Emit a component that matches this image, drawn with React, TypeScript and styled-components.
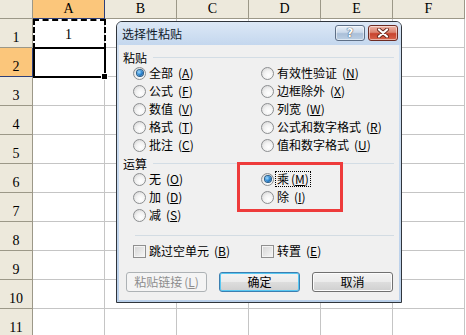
import React from "react";
import styled, { createGlobalStyle } from "styled-components";

const GlobalStyle = createGlobalStyle`
  html, body {
    margin: 0;
    padding: 0;
  }
  body {
    width: 466px;
    height: 335px;
    overflow: hidden;
    background: #fff;
    font-family: "Noto Sans CJK SC", sans-serif;
  }
`;

const Screen = styled.div`
  position: relative;
  width: 466px;
  height: 335px;
  overflow: hidden;
  background: #fff;
`;

/* ---------- spreadsheet ---------- */

const Sheet = styled.div`
  display: grid;
  grid-template-columns: 33px repeat(6, 72px);
  grid-template-rows: 19px repeat(11, 29px);
  font-family: "Liberation Serif", "DejaVu Serif", serif;
  font-size: 14px;
  color: #000;
`;

const HeadCell = styled.div<{ $active?: boolean; $row?: boolean }>`
  box-sizing: border-box;
  display: flex;
  justify-content: center;
  align-items: ${({ $row }) => ($row ? "flex-end" : "center")};
  padding-bottom: ${({ $row }) => ($row ? "1px" : "0")};
  background: ${({ $active }) => ($active ? "#fbc67b" : "#ede9dc")};
  border-right: 1px solid ${({ $active }) => ($active ? "#2d3f7a" : "#9c9888")};
  border-bottom: 1px solid ${({ $active }) => ($active ? "#2d3f7a" : "#9c9888")};
`;

const Cell = styled.div<{ $mode?: "copied" | "selected" }>`
  position: relative;
  box-sizing: border-box;
  display: flex;
  justify-content: center;
  align-items: flex-end;
  padding-bottom: 4px;
  border-right: 1px solid #c5c5c5;
  border-bottom: 1px solid #c5c5c5;

  &::after {
    content: "";
    position: absolute;
    display: ${({ $mode }) => ($mode ? "block" : "none")};
    left: 0;
    top: ${({ $mode }) => ($mode === "selected" ? "-1px" : "0")};
    right: -2px;
    bottom: -2px;
    border: 2px ${({ $mode }) => ($mode === "copied" ? "dashed" : "solid")} #000;
  }
`;

const FillHandle = styled.span`
  position: absolute;
  right: -4px;
  bottom: -4px;
  width: 5px;
  height: 5px;
  background: #000;
  border: 1px solid #fff;
  z-index: 1;
`;

/* ---------- dialog ---------- */

const Dialog = styled.div`
  position: absolute;
  left: 116px;
  top: 21px;
  width: 286px;
  height: 282px;
  box-sizing: border-box;
  border: 1px solid #30353c;
  border-radius: 6px 6px 0 0;
  background: linear-gradient(#d3e2f3, #b9cfe9);
  display: flex;
  flex-direction: column;
  font-family: "Noto Sans CJK SC", sans-serif;
  font-size: 12px;
  color: #000;
  overflow: hidden;
`;

const TitleBar = styled.div`
  height: 23px;
  flex: none;
  display: flex;
  align-items: center;
  gap: 3px;
  padding: 0 3px 0 5px;
  background: linear-gradient(#dce8f6, #c4d7ee);
`;

const Title = styled.span`
  flex: 1;
  font-size: 12px;
  color: #0f1a2a;
  line-height: 1;
`;

const CaptionButton = styled.button<{ $close?: boolean }>`
  width: 30px;
  height: 16px;
  box-sizing: border-box;
  padding: 0;
  margin-top: -1px;
  border-radius: 3px;
  border: 1px solid ${({ $close }) => ($close ? "#6d2b22" : "#5e6f86")};
  background: ${({ $close }) =>
    $close
      ? "linear-gradient(#edb4a6 0%, #dc8470 45%, #c8432e 55%, #d8654c 100%)"
      : "linear-gradient(#eaf1f8 0%, #cbd9ea 45%, #aabfd8 55%, #bccfe4 100%)"};
  box-shadow: inset 0 0 0 1px rgba(255, 255, 255, 0.5);
  display: flex;
  align-items: center;
  justify-content: center;
  font-family: "DejaVu Sans", sans-serif;
  font-weight: bold;
  font-size: 12px;
  color: #fff;
  text-shadow: 0 0 1px #34445a, 0 0 1px #34445a;
`;

const Body = styled.div`
  flex: 1;
  margin: 0 2px 2px;
  background: #f0f0f0;
  display: flex;
  flex-direction: column;
  padding-left: 4px;
`;

const GroupHeader = styled.div<{ $top: number }>`
  height: 13px;
  margin-top: ${({ $top }) => $top}px;
  display: flex;
  align-items: center;
  gap: 6px;
  line-height: 1;

  &::after {
    content: "";
    flex: 1;
    height: 1px;
    margin-right: 5px;
    background: #d3dde5;
  }
`;

const OptionGrid = styled.div`
  display: grid;
  grid-template-columns: 128px 1fr;
  grid-auto-rows: 18px;
  margin-left: 10px;
`;

const Option = styled.div`
  display: flex;
  align-items: center;
  gap: 3px;
  white-space: nowrap;
  line-height: 1;
`;

const Radio = styled.span<{ $checked?: boolean }>`
  width: 13px;
  height: 13px;
  flex: none;
  box-sizing: border-box;
  border-radius: 50%;
  border: 1px solid #8c8e90;
  background: radial-gradient(circle at 60% 65%, #ffffff 0, #f2f2f2 45%, #cdcdcd 100%);
  display: flex;
  align-items: center;
  justify-content: center;

  &::after {
    content: "";
    display: ${({ $checked }) => ($checked ? "block" : "none")};
    width: 6px;
    height: 6px;
    border-radius: 50%;
    background: radial-gradient(circle at 35% 35%, #a4dcff 0, #2b86d2 50%, #0c3f78 100%);
    box-shadow: 0 0 0 1px #275d8a;
  }
`;

const Check = styled.span`
  width: 13px;
  height: 13px;
  flex: none;
  box-sizing: border-box;
  border: 1px solid #8f8f8f;
  background: linear-gradient(135deg, #d4d4d4, #f7f7f7);
  box-shadow: inset 0 0 0 1px #f4f4f4;
`;

const Focus = styled.span`
  outline: 1px dotted #000;
  outline-offset: 1px;
`;

const Key = styled.span`
  margin-left: 2px;
  font-size: 12px;
  & u {
    text-underline-offset: 1px;
  }
`;

const Separator = styled.div`
  height: 1px;
  margin: 11px 5px 0 12px;
  background: #d3dce3;
`;

const CheckGrid = styled(OptionGrid)`
  margin-top: 6px;
`;

const ButtonRow = styled.div`
  display: flex;
  gap: 12px;
  margin: 12px 0 0 3px;
`;

const PushButton = styled.button<{ $focused?: boolean }>`
  width: 81px;
  height: 20px;
  box-sizing: border-box;
  padding: 0;
  border-radius: 3px;
  font-family: "Noto Sans CJK SC", sans-serif;
  font-size: 12px;
  line-height: 1;
  color: #000;
  border: 1px solid ${({ $focused }) => ($focused ? "#3c7fb1" : "#707070")};
  background: linear-gradient(#f3f3f3 0%, #ebebeb 48%, #dddddd 52%, #cfcfcf 100%);
  box-shadow: ${({ $focused }) =>
    $focused ? "inset 0 0 0 1px #58c8f2" : "inset 0 0 0 1px #fcfcfc"};

  &:disabled {
    border-color: #adb2b5;
    background: #f4f4f4;
    color: #8d8d8d;
    box-shadow: none;
  }
`;

const Annotation = styled.div`
  position: absolute;
  left: 237px;
  top: 162px;
  width: 106px;
  height: 50px;
  box-sizing: border-box;
  border: 3px solid #ee3b3b;
`;

const Label: React.FC<{ text: string; k: string }> = ({ text, k }) => (
  <>
    {text}
    <Key>
      (<u>{k}</u>)
    </Key>
  </>
);

const columns = ["A", "B", "C", "D", "E", "F"];
const rows = Array.from({ length: 11 }, (_, i) => i + 1);

const pasteOptions: [string, string][] = [
  ["全部", "A"],
  ["有效性验证", "N"],
  ["公式", "F"],
  ["边框除外", "X"],
  ["数值", "V"],
  ["列宽", "W"],
  ["格式", "T"],
  ["公式和数字格式", "R"],
  ["批注", "C"],
  ["值和数字格式", "U"],
];

export default function App() {
  return (
    <Screen>
      <GlobalStyle />
      <Sheet>
        <HeadCell />
        {columns.map((c) => (
          <HeadCell key={c} $active={c === "A"}>
            {c}
          </HeadCell>
        ))}
        {rows.map((r) => (
          <React.Fragment key={r}>
            <HeadCell $row $active={r === 2}>
              {r}
            </HeadCell>
            {columns.map((c) => {
              const id = `${c}${r}`;
              if (id === "A1") {
                return (
                  <Cell key={id} $mode="copied">
                    1
                  </Cell>
                );
              }
              if (id === "A2") {
                return (
                  <Cell key={id} $mode="selected">
                    <FillHandle />
                  </Cell>
                );
              }
              return <Cell key={id} />;
            })}
          </React.Fragment>
        ))}
      </Sheet>

      <Dialog>
        <TitleBar>
          <Title>选择性粘贴</Title>
          <CaptionButton>?</CaptionButton>
          <CaptionButton $close>
            <svg width="14" height="10" viewBox="0 0 14 10">
              <path d="M3 1.5 L11 8.5 M11 1.5 L3 8.5" stroke="#6a2a20" strokeWidth="4" strokeLinecap="round" />
              <path d="M3 1.5 L11 8.5 M11 1.5 L3 8.5" stroke="#fff" strokeWidth="2.2" strokeLinecap="round" />
            </svg>
          </CaptionButton>
        </TitleBar>
        <Body>
          <GroupHeader $top={6}>粘贴</GroupHeader>
          <OptionGrid>
            {pasteOptions.map(([text, k], i) => (
              <Option key={k}>
                <Radio $checked={i === 0} />
                <Label text={text} k={k} />
              </Option>
            ))}
          </OptionGrid>

          <GroupHeader $top={3}>运算</GroupHeader>
          <OptionGrid>
            <Option>
              <Radio />
              <Label text="无" k="O" />
            </Option>
            <Option>
              <Radio $checked />
              <Focus>
                <Label text="乘" k="M" />
              </Focus>
            </Option>
            <Option>
              <Radio />
              <Label text="加" k="D" />
            </Option>
            <Option>
              <Radio />
              <Label text="除" k="I" />
            </Option>
            <Option>
              <Radio />
              <Label text="减" k="S" />
            </Option>
          </OptionGrid>

          <Separator />

          <CheckGrid>
            <Option>
              <Check />
              <Label text="跳过空单元" k="B" />
            </Option>
            <Option>
              <Check />
              <Label text="转置" k="E" />
            </Option>
          </CheckGrid>

          <ButtonRow>
            <PushButton disabled>
              <Label text="粘贴链接" k="L" />
            </PushButton>
            <PushButton $focused>确定</PushButton>
            <PushButton>取消</PushButton>
          </ButtonRow>
        </Body>
      </Dialog>

      <Annotation />
    </Screen>
  );
}
